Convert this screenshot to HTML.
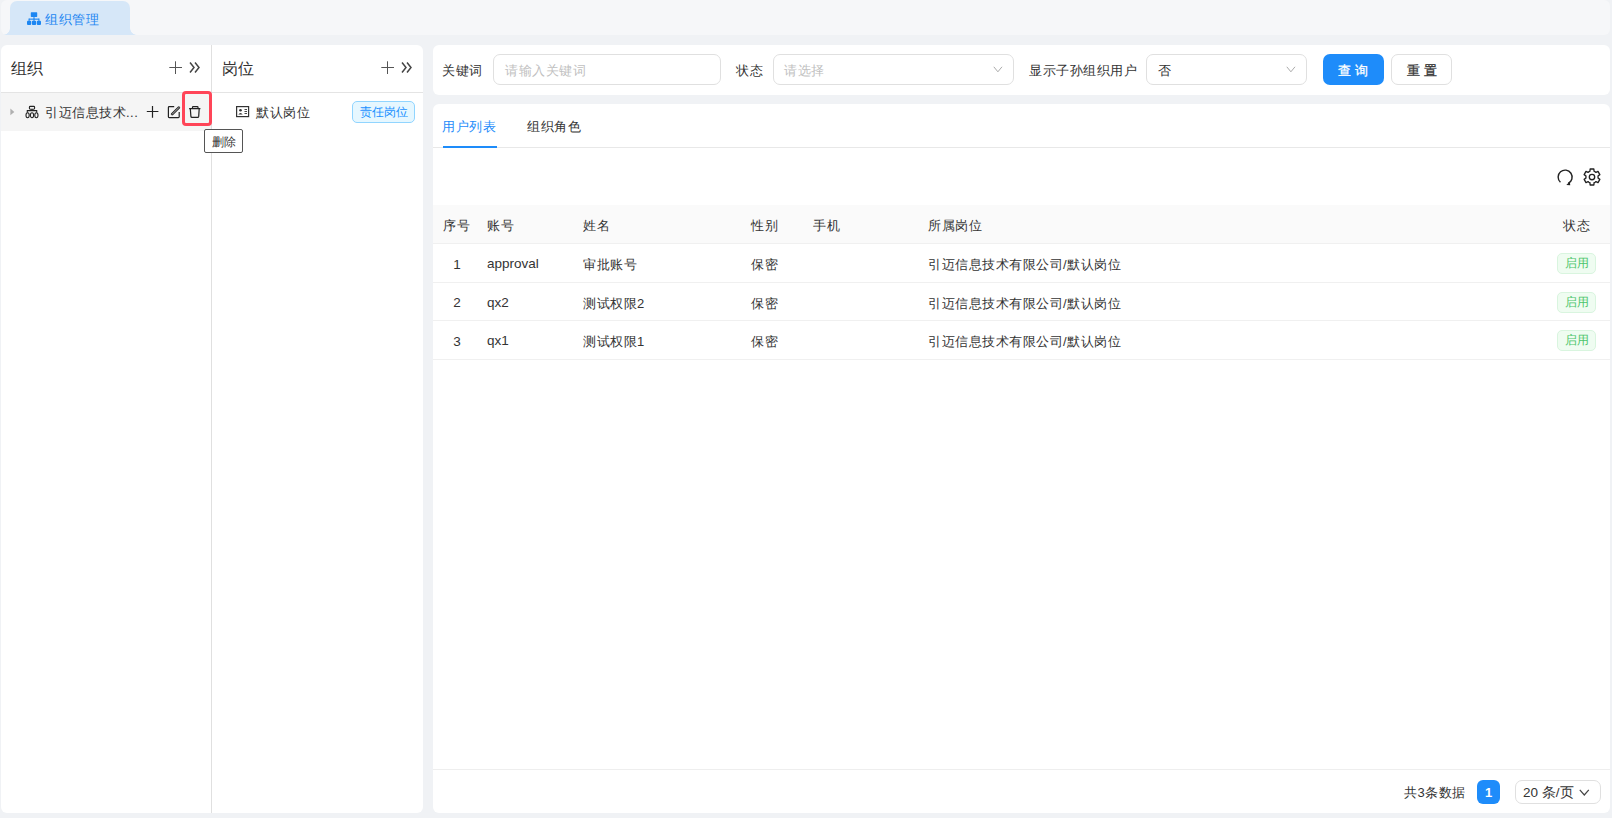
<!DOCTYPE html>
<html><head><meta charset="utf-8">
<style>
*{box-sizing:border-box;margin:0;padding:0}
html,body{width:1612px;height:818px;overflow:hidden}
body{background:#f0f2f5;font-family:"Liberation Sans",sans-serif;color:#333;font-size:13.5px;position:relative}
.abs{position:absolute}
.t{position:absolute;white-space:nowrap;line-height:1}
#topbar{left:1px;top:0;width:1609px;height:35px;background:#f6f7f9;border-radius:6px}
#tab{left:10px;top:1px;width:120px;height:34px;background:#d6e7f8;border-radius:7px 7px 0 0}
.inv{position:absolute;bottom:0;width:7px;height:7px;background:radial-gradient(circle at 0 0,transparent 6px,#d6e7f8 6px)}
#lp{left:1px;top:45px;width:422px;height:768px;background:#fff;border-radius:6px}
#card1{left:433px;top:45px;width:1177px;height:50px;background:#fff;border-radius:6px}
#card2{left:433px;top:104px;width:1177px;height:709px;background:#fff;border-radius:6px}
.input{position:absolute;border:1px solid #e0e0e0;border-radius:7px;background:#fff}
.ph{color:#bfbfbf}
.chev{position:absolute;width:7px;height:7px;border-right:1px solid #aaa;border-bottom:1px solid #aaa;transform:rotate(45deg)}
.row{left:0;width:1177px;height:38.5px}
.row .t{top:14px}
.row .lat{top:13px}
.row .num{left:19px!important;top:13.5px}
.cj{font-size:13px;letter-spacing:0.5px;color:#333}
.lat{font-size:13.5px;color:#333}
.num{font-size:13.5px;color:#333;width:10px;text-align:center}
.tag{position:absolute;left:1124px;top:9px;width:39px;height:21px;border:1px solid #d9f5df;background:#effcf1;border-radius:5px;color:#4cc56a;font-size:12px;line-height:19px;text-align:center}
</style></head>
<body>
<div id="topbar" class="abs"></div>
<div id="tab" class="abs">
  <div class="inv" style="left:-7px;background:radial-gradient(circle at 0 0,transparent 6.5px,#d6e7f8 7.2px)"></div>
  <div class="inv" style="right:-7px;background:radial-gradient(circle at 100% 0,transparent 6.5px,#d6e7f8 7.2px)"></div>
  <svg class="abs" style="left:17px;top:11px" width="14" height="14" viewBox="0 0 14 14" fill="#1c86f2">
    <rect x="3.8" y="0.3" width="6.4" height="4.6" rx="0.6"/>
    <rect x="6.5" y="4.5" width="1" height="2.5"/>
    <rect x="1.8" y="6.6" width="10.4" height="1.1"/>
    <rect x="1.6" y="6.6" width="1" height="2.5"/><rect x="6.5" y="6.6" width="1" height="2.5"/><rect x="11.4" y="6.6" width="1" height="2.5"/>
    <rect x="0" y="8.8" width="4.2" height="4.3" rx="1"/><rect x="4.9" y="8.8" width="4.2" height="4.3" rx="1"/><rect x="9.8" y="8.8" width="4.2" height="4.3" rx="1"/>
  </svg>
  <div class="t" style="left:35px;top:12px;font-size:13px;letter-spacing:0.5px;color:#1c86f2">组织管理</div>
</div>

<!-- left panel -->
<div id="lp" class="abs">
  <div class="abs" style="left:0;top:47px;width:422px;height:1px;background:#e4e4e4"></div>
  <div class="abs" style="left:0;top:48px;width:210px;height:38px;background:#f5f5f5"></div>
  <div class="abs" style="left:210px;top:0;width:1px;height:768px;background:#e0e0e0"></div>
  <div class="t" style="left:10px;top:16px;font-size:15.5px;color:#333">组织</div>
  <div class="t" style="left:221px;top:16px;font-size:15.5px;color:#333">岗位</div>
  <svg class="abs" style="left:167px;top:15px" width="15" height="15" viewBox="0 0 15 15"><path d="M7.5 1.3V14M1.3 7.5H14" stroke="#555" stroke-width="1"/></svg>
  <svg class="abs" style="left:187px;top:16px" width="14" height="13" viewBox="0 0 14 13" fill="none" stroke="#444" stroke-width="1.5"><path d="M2 1.5L6 6.5L2 11.5M7 1.5L11 6.5L7 11.5"/></svg>
  <svg class="abs" style="left:379px;top:15px" width="15" height="15" viewBox="0 0 15 15"><path d="M7.5 1.3V14M1.3 7.5H14" stroke="#555" stroke-width="1"/></svg>
  <svg class="abs" style="left:399px;top:16px" width="14" height="13" viewBox="0 0 14 13" fill="none" stroke="#444" stroke-width="1.5"><path d="M2 1.5L6 6.5L2 11.5M7 1.5L11 6.5L7 11.5"/></svg>
  <!-- tree row -->
  <svg class="abs" style="left:8px;top:63px" width="8" height="8" viewBox="0 0 8 8"><path d="M1.4 0.5L5.3 3.9L1.4 7.3Z" fill="#b0b0b0"/></svg>
  <svg class="abs" style="left:23px;top:60px" width="16" height="14" viewBox="0 0 16 14" fill="none" stroke="#222" stroke-width="1.1">
    <rect x="5.4" y="1.4" width="5.2" height="2.8" rx="0.9"/>
    <path d="M8 4.2V5.6M3.3 7.5V5.6H12.7V7.5"/>
    <ellipse cx="3.6" cy="10.2" rx="1.6" ry="2.5"/><ellipse cx="8" cy="10.2" rx="1.6" ry="2.5"/><ellipse cx="12.4" cy="10.2" rx="1.6" ry="2.5"/>
  </svg>
  <div class="t" style="left:44px;top:61px;font-size:13px;color:#333;letter-spacing:0.5px">引迈信息技术...</div>
  <svg class="abs" style="left:145px;top:61px" width="14" height="13" viewBox="0 0 14 13"><path d="M6.5 0V11.7M0.8 5.5H12.4" stroke="#222" stroke-width="1.2"/></svg>
  <svg class="abs" style="left:166px;top:61px" width="14" height="13" viewBox="0 0 14 13" fill="none"><path d="M7.2 0.6H2.2Q1.4 0.6 1.4 1.4V10.8Q1.4 11.6 2.2 11.6H11.4Q12.2 11.6 12.2 10.8V6.1" stroke="#222" stroke-width="1.2"/><path d="M5.2 8.2L11.8 1.6" stroke="#222" stroke-width="2.6" stroke-linecap="round"/><path d="M5.2 8.2L11.8 1.6" stroke="#f5f5f5" stroke-width="0.7" stroke-linecap="round"/></svg>
  <svg class="abs" style="left:187px;top:61px" width="14" height="13" viewBox="0 0 14 13" fill="none" stroke="#222" stroke-width="1.2"><path d="M1.1 2.6H12.4M4.5 2.4V1.3Q4.5 0.6 5.2 0.6H9.3Q10 0.6 10 1.3V2.4M2.3 2.6L2.9 10.4Q3 11.4 4 11.4H9.6Q10.6 11.4 10.7 10.4L11.2 2.6"/></svg>
  <div class="abs" style="left:181px;top:46px;width:30px;height:35px;border:3px solid #ff4558;border-radius:4px"></div>
  <!-- tooltip -->
  <div class="abs" style="left:203px;top:84px;width:39px;height:24px;border:1px solid #555;background:#fff;border-radius:2px"><div class="t" style="left:7px;top:6px;font-size:12px;color:#333">删除</div></div>
  <!-- post row -->
  <svg class="abs" style="left:234px;top:60px" width="15" height="13" viewBox="0 0 15 13" fill="none" stroke="#333" stroke-width="1.2"><rect x="1.6" y="1.6" width="12" height="10" /><circle cx="5.5" cy="5.3" r="1.3" fill="#333" stroke="none"/><path d="M3.3 9.5Q5.5 6.5 7.7 9.5Z" fill="#333" stroke="none"/><path d="M9.5 4.5H12M9.5 6.5H12M9.5 8.5H12" stroke-width="0.9"/></svg>
  <div class="t" style="left:255px;top:61px;font-size:13px;color:#333;letter-spacing:0.5px">默认岗位</div>
  <div class="abs" style="left:351px;top:56px;width:63px;height:22px;border:1px solid #91d5ff;background:#e6f7ff;border-radius:5px"><div class="t" style="left:7px;top:4px;font-size:12px;color:#1890ff">责任岗位</div></div>
</div>

<div id="card1" class="abs">
  <div class="t cj" style="left:9px;top:19px">关键词</div>
  <div class="input" style="left:60px;top:9px;width:228px;height:31px"><div class="t ph cj" style="left:11px;top:9px;color:#bfbfbf">请输入关键词</div></div>
  <div class="t cj" style="left:303px;top:19px">状态</div>
  <div class="input" style="left:340px;top:9px;width:241px;height:31px"><div class="t ph cj" style="left:10px;top:9px;color:#bfbfbf">请选择</div><svg class="abs" style="left:219px;top:11px" width="11" height="8" viewBox="0 0 11 8"><path d="M0.8 0.8L4.9 5.8L9 0.8" fill="none" stroke="#aaa" stroke-width="1"/></svg></div>
  <div class="t cj" style="left:596px;top:19px">显示子孙组织用户</div>
  <div class="input" style="left:713px;top:9px;width:161px;height:31px"><div class="t cj" style="left:11px;top:9px">否</div><svg class="abs" style="left:139px;top:11px" width="11" height="8" viewBox="0 0 11 8"><path d="M0.8 0.8L4.9 5.8L9 0.8" fill="none" stroke="#aaa" stroke-width="1"/></svg></div>
  <div class="abs" style="left:890px;top:9px;width:61px;height:31px;background:#1e8cfa;border-radius:7px"><div class="t" style="left:15px;top:10px;color:#fff;letter-spacing:4px;font-size:13px;-webkit-text-stroke:0.3px currentColor">查询</div></div>
  <div class="input" style="left:958px;top:9px;width:61px;height:31px"><div class="t" style="left:15px;top:9px;letter-spacing:4px;font-size:13px;-webkit-text-stroke:0.3px currentColor;color:#333">重置</div></div>
</div>

<div id="card2" class="abs">
  <div class="abs" style="left:0;top:43px;width:1177px;height:1px;background:#e8e8e8"></div>
  <div class="abs" style="left:10px;top:42px;width:54px;height:2px;background:#1e8cfa"></div>
  <div class="t cj" style="left:9px;top:16px;color:#1e8cfa">用户列表</div>
  <div class="t cj" style="left:94px;top:16px">组织角色</div>
  <svg class="abs" style="left:1123px;top:64px" width="18" height="20" viewBox="0 0 18 20" fill="none" stroke="#222" stroke-width="1.4"><path d="M4.45 14.33A7 7 0 1 1 12.2 15.4"/><path d="M10.3 16.9L13.9 13.4L14.2 17.3Z" fill="#222" stroke="none"/></svg>
  <svg class="abs" style="left:1149px;top:62.7px" width="20" height="20" viewBox="0 0 20 20" fill="none" stroke="#222" stroke-width="1.35"><path d="M6.95 4.72 L7.91 4.27 L8.16 2.01 L11.84 2.01 L12.09 4.27 L13.05 4.72 L13.92 5.33 L16.00 4.41 L17.84 7.60 L16.01 8.94 L16.10 10.00 L16.01 11.06 L17.84 12.40 L16.00 15.59 L13.92 14.67 L13.05 15.28 L12.09 15.73 L11.84 17.99 L8.16 17.99 L7.91 15.73 L6.95 15.28 L6.08 14.67 L4.00 15.59 L2.16 12.40 L3.99 11.06 L3.90 10.00 L3.99 8.94 L2.16 7.60 L4.00 4.41 L6.08 5.33Z" stroke-linejoin="round"/><circle cx="10" cy="10" r="2.7"/></svg>
  <div class="abs" style="left:0;top:101px;width:1177px;height:38px;background:#fafafa"></div>
  <div class="abs" style="left:0;top:139px;width:1177px;height:1px;background:#f0f0f0"></div>
  <div class="t cj" style="left:10px;top:115px">序号</div>
  <div class="t cj" style="left:54px;top:115px">账号</div>
  <div class="t cj" style="left:150px;top:115px">姓名</div>
  <div class="t cj" style="left:318px;top:115px">性别</div>
  <div class="t cj" style="left:380px;top:115px">手机</div>
  <div class="t cj" style="left:495px;top:115px">所属岗位</div>
  <div class="t cj" style="left:1130px;top:115px">状态</div>
  <div class="abs row" style="top:140.0px">
    <div class="t num" style="left:20px">1</div>
    <div class="t lat" style="left:54px">approval</div>
    <div class="t cj" style="left:150px">审批账号</div>
    <div class="t cj" style="left:318px">保密</div>
    <div class="t cj" style="left:495px">引迈信息技术有限公司/默认岗位</div>
    <div class="tag">启用</div>
    <div class="abs" style="left:0;bottom:0;width:1177px;height:1px;background:#f0f0f0"></div>
  </div>
  <div class="abs row" style="top:178.5px">
    <div class="t num" style="left:20px">2</div>
    <div class="t lat" style="left:54px">qx2</div>
    <div class="t cj" style="left:150px">测试权限2</div>
    <div class="t cj" style="left:318px">保密</div>
    <div class="t cj" style="left:495px">引迈信息技术有限公司/默认岗位</div>
    <div class="tag">启用</div>
    <div class="abs" style="left:0;bottom:0;width:1177px;height:1px;background:#f0f0f0"></div>
  </div>
  <div class="abs row" style="top:217.0px">
    <div class="t num" style="left:20px">3</div>
    <div class="t lat" style="left:54px">qx1</div>
    <div class="t cj" style="left:150px">测试权限1</div>
    <div class="t cj" style="left:318px">保密</div>
    <div class="t cj" style="left:495px">引迈信息技术有限公司/默认岗位</div>
    <div class="tag">启用</div>
    <div class="abs" style="left:0;bottom:0;width:1177px;height:1px;background:#f0f0f0"></div>
  </div>
  <div class="abs" style="left:0;top:665px;width:1177px;height:1px;background:#eee"></div>
  <div class="t cj" style="left:971px;top:682px">共3条数据</div>
  <div class="abs" style="left:1044px;top:676px;width:23px;height:24px;background:#1e8cfa;border-radius:6px"><div class="t" style="left:0;width:23px;text-align:center;top:6px;color:#fff;font-weight:bold;font-size:13px">1</div></div>
  <div class="input" style="left:1082px;top:676px;width:86px;height:24px"><div class="t cj" style="left:7px;top:5px;font-size:13.5px;letter-spacing:0">20 条/页</div><svg class="abs" style="left:63px;top:7.5px" width="11" height="8" viewBox="0 0 11 8"><path d="M0.8 0.8L5.3 6L9.8 0.8" fill="none" stroke="#444" stroke-width="1.2"/></svg></div>
</div>
</body></html>
